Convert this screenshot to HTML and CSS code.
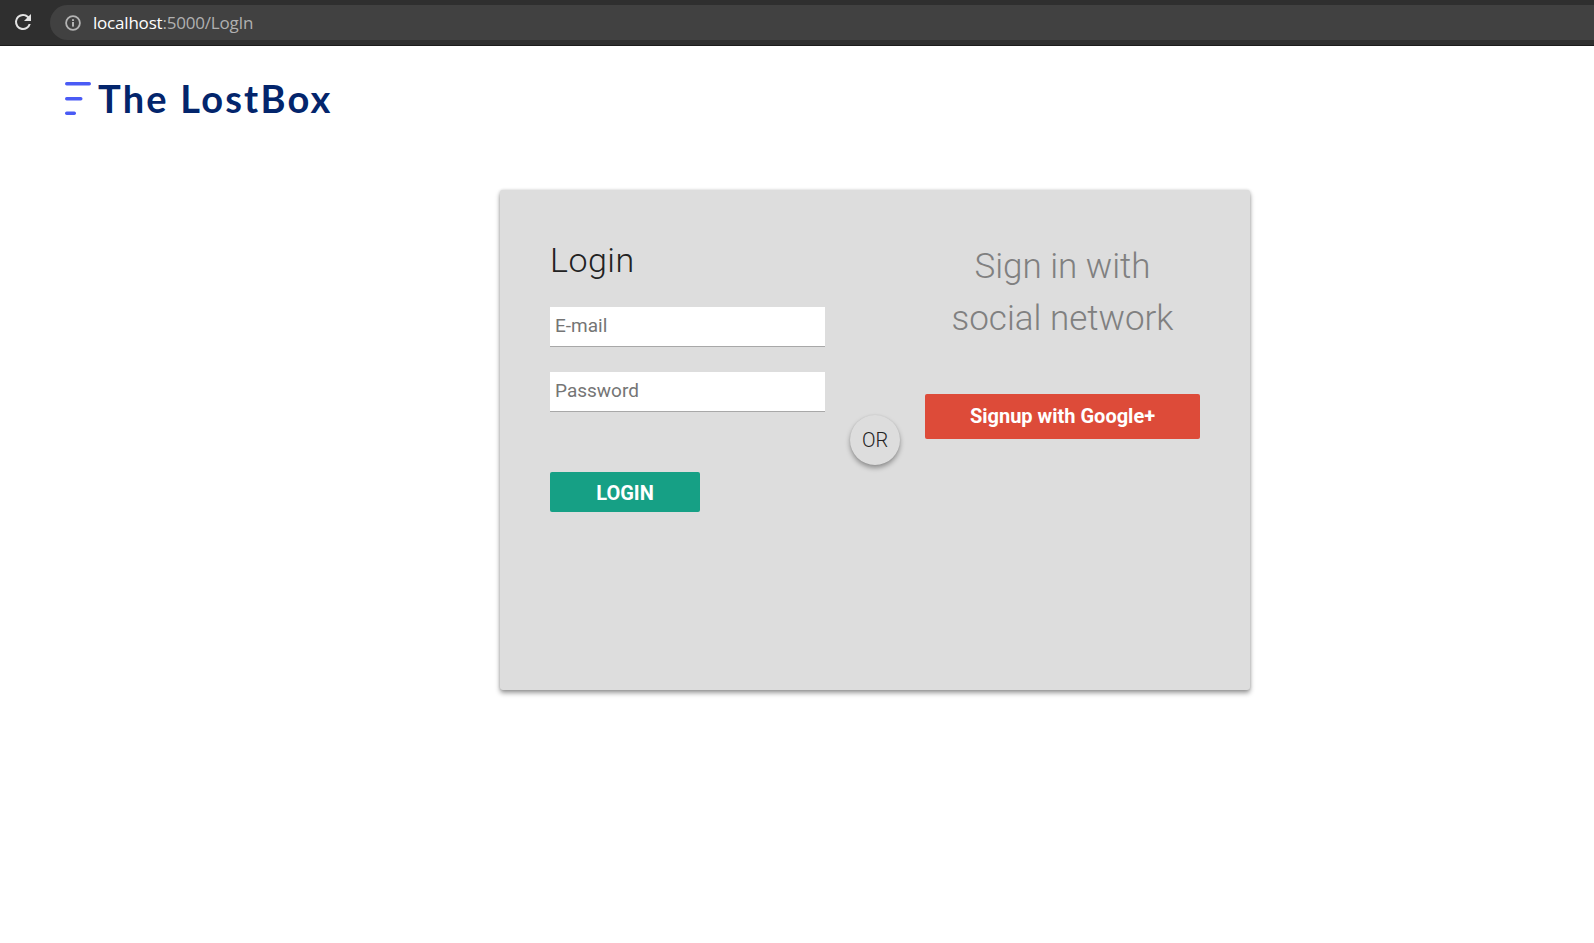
FILE: index.html
```html
<!DOCTYPE html>
<html lang="en">
<head>
<meta charset="utf-8">
<title>The LostBox</title>
<link rel="stylesheet" href="styles.css">
</head>
<body>
<div class="chrome">
  <svg class="reload" viewBox="0 0 24 24" width="24" height="24"><path fill="#e3e3e3" d="M17.65 6.35A7.96 7.96 0 0 0 12 4a8 8 0 1 0 7.73 10h-2.08A6 6 0 1 1 12 6c1.66 0 3.14.69 4.22 1.78L13 11h7V4l-2.35 2.35z"/></svg>
  <div class="omnibox">
    <svg class="info" viewBox="0 0 16 16" width="16" height="16"><circle cx="8" cy="8" r="6.9" fill="none" stroke="#b4b4b4" stroke-width="1.8"/><rect x="7" y="7" width="2" height="4.6" fill="#b4b4b4"/><rect x="7" y="4.2" width="2" height="1.8" fill="#b4b4b4"/></svg>
    <span class="url"><span class="host">localhost</span>:5000/LogIn</span>
  </div>
</div>
<header class="brand">
  <svg class="brand-mark" viewBox="0 0 26 33" width="26" height="33"><g fill="#4a5bf5"><rect x="0" y="0" width="26" height="3.4" rx="1.7"/><rect x="0" y="15" width="17.5" height="3.4" rx="1.7"/><rect x="0" y="29.5" width="11" height="3.4" rx="1.7"/></g></svg>
  <span class="brand-name">The LostBox</span>
</header>
<main class="card">
  <section class="col-login">
    <h1 class="login-title">Login</h1>
    <input class="field" type="text" placeholder="E-mail">
    <input class="field field-second" type="password" placeholder="Password">
    <button class="btn btn-login" type="button">LOGIN</button>
  </section>
  <div class="col-or"><span class="or">OR</span></div>
  <section class="col-social">
    <h2 class="social-title">Sign in with<br>social network</h2>
    <button class="btn btn-google" type="button">Signup with Google+</button>
  </section>
</main>
</body>
</html>
```
FILE: styles.css
```css
* { box-sizing: border-box; }
html, body { margin: 0; padding: 0; }
body { background: #fff; font-family: Roboto, "Liberation Sans", sans-serif; height: 943px; overflow: hidden; }

.chrome { height: 46px; background: #2f2f2f; border-bottom: 1px solid #1c1c1c; padding-top: 5px; padding-left: 11px; display: flex; align-items: flex-start; }
.reload { margin-top: 5px; width: 24px; height: 24px; flex: none; }
.omnibox { flex: 1; margin-left: 15px; height: 35px; background: #414141; border-radius: 17.5px 0 0 17.5px; display: flex; align-items: center; padding-left: 15px; }
.info { flex: none; }
.url { margin-left: 12px; font-size: 17px; letter-spacing: -0.2px; color: #b0b0b0; font-family: "Open Sans", sans-serif; }
.host { color: #fff; }

.brand { display: flex; align-items: flex-start; padding: 36px 0 0 65px; height: 100px; }
.brand-mark { flex: none; }
.brand-name { margin-left: 7px; margin-top: -3px; font-family: Lato, sans-serif; font-weight: 700; font-size: 38px; letter-spacing: 2.2px; color: #03256c; line-height: 1; }

.card { width: 750px; height: 500px; margin: 44px 0 0 500px; background: #ddd; border-radius: 3px; box-shadow: 0 3px 5px rgba(0,0,0,.4), 0 0 3px rgba(0,0,0,.15); padding: 0 50px; display: grid; grid-template-columns: 275px 100px 275px; }

.col-login { padding-top: 50px; display: flex; flex-direction: column; align-items: flex-start; }
.login-title { margin: 0; font-weight: 300; font-size: 34px; line-height: 40px; color: #222; letter-spacing: .5px; }
.field { width: 275px; height: 40px; margin-top: 27px; border: 0; border-bottom: 1px solid #a8a8a8; background: #fff; padding: 0 5px 2px; font-family: inherit; font-size: 19px; color: #6b6b6b; outline: 0; border-radius: 0; }
.field::placeholder { color: #757575; opacity: 1; }
.field-second { margin-top: 25px; }

.btn { border: 0; border-radius: 2px; color: #fff; font-family: inherit; font-weight: 700; font-size: 20px; padding: 0; cursor: pointer; }
.btn-login { margin-top: 60px; width: 150px; height: 40px; padding-top: 1px; background: #16a085; }

.col-or { padding: 225px 0 0 25px; }
.or { display: flex; width: 50px; height: 50px; align-items: center; justify-content: center; border-radius: 50%; background: #ddd; box-shadow: 0 3px 5px rgba(0,0,0,.35), 0 0 2px rgba(0,0,0,.08); font-weight: 300; font-size: 20px; color: #222; }

.col-social { padding-top: 51px; display: flex; flex-direction: column; align-items: center; }
.social-title { margin: 0; font-weight: 300; font-size: 35px; line-height: 52px; color: #808080; text-align: center; }
.btn-google { margin-top: 49px; width: 275px; height: 45px; padding-bottom: 2px; background: #dd4b39; }
```
